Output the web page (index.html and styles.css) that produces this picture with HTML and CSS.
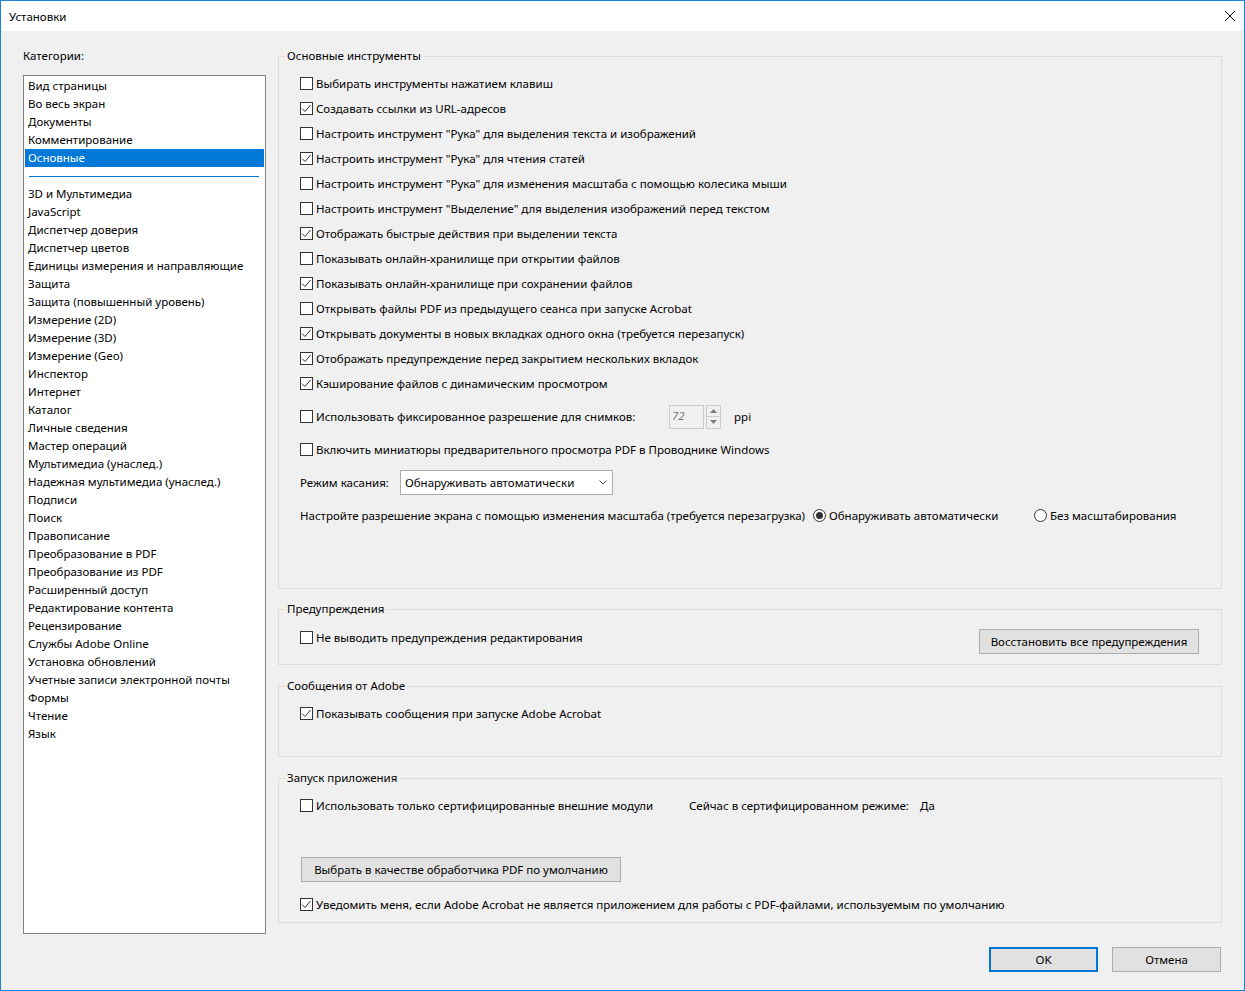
FILE: index.html
```html
<!DOCTYPE html>
<html lang="ru">
<head>
    <meta charset="UTF-8">
    <title>Установки</title>
    <link rel="stylesheet" href="styles.css">
</head>
<body>
<div class="window">
    <div class="titlebar">
        <span class="title">Установки</span>
        <svg class="close" width="10" height="10" viewBox="0 0 10 10"><path d="M0 0L10 10M10 0L0 10" stroke="#000" stroke-width="1"/></svg>
    </div>

    <div class="main">
        <div class="sidebar">
            <div class="side-label">Категории:</div>
            <ul class="category-list">
                <li>Вид страницы</li>
                <li>Во весь экран</li>
                <li>Документы</li>
                <li>Комментирование</li>
                <li class="selected">Основные</li>
                <li class="sep"></li>
                <li>3D и Мультимедиа</li>
                <li>JavaScript</li>
                <li>Диспетчер доверия</li>
                <li>Диспетчер цветов</li>
                <li>Единицы измерения и направляющие</li>
                <li>Защита</li>
                <li>Защита (повышенный уровень)</li>
                <li>Измерение (2D)</li>
                <li>Измерение (3D)</li>
                <li>Измерение (Geo)</li>
                <li>Инспектор</li>
                <li>Интернет</li>
                <li>Каталог</li>
                <li>Личные сведения</li>
                <li>Мастер операций</li>
                <li>Мультимедиа (унаслед.)</li>
                <li>Надежная мультимедиа (унаслед.)</li>
                <li>Подписи</li>
                <li>Поиск</li>
                <li>Правописание</li>
                <li>Преобразование в PDF</li>
                <li>Преобразование из PDF</li>
                <li>Расширенный доступ</li>
                <li>Редактирование контента</li>
                <li>Рецензирование</li>
                <li>Службы Adobe Online</li>
                <li>Установка обновлений</li>
                <li>Учетные записи электронной почты</li>
                <li>Формы</li>
                <li>Чтение</li>
                <li>Язык</li>
            </ul>
        </div>

        <div class="panel">
            <section class="group group-tools">
                <div class="group-title">Основные инструменты</div>
                <div class="checks">
                    <label class="check"><span class="box"></span>Выбирать инструменты нажатием клавиш</label>
                    <label class="check"><span class="box"><svg width="11" height="11" viewBox="0 0 11 11"><path d="M1 5.5L4 8.5L9.5 2" fill="none" stroke="#333"/></svg></span>Создавать ссылки из URL-адресов</label>
                    <label class="check"><span class="box"></span>Настроить инструмент "Рука" для выделения текста и изображений</label>
                    <label class="check"><span class="box"><svg width="11" height="11" viewBox="0 0 11 11"><path d="M1 5.5L4 8.5L9.5 2" fill="none" stroke="#333"/></svg></span>Настроить инструмент "Рука" для чтения статей</label>
                    <label class="check"><span class="box"></span>Настроить инструмент "Рука" для изменения масштаба с помощью колесика мыши</label>
                    <label class="check"><span class="box"></span>Настроить инструмент "Выделение" для выделения изображений перед текстом</label>
                    <label class="check"><span class="box"><svg width="11" height="11" viewBox="0 0 11 11"><path d="M1 5.5L4 8.5L9.5 2" fill="none" stroke="#333"/></svg></span>Отображать быстрые действия при выделении текста</label>
                    <label class="check"><span class="box"></span>Показывать онлайн-хранилище при открытии файлов</label>
                    <label class="check"><span class="box"><svg width="11" height="11" viewBox="0 0 11 11"><path d="M1 5.5L4 8.5L9.5 2" fill="none" stroke="#333"/></svg></span>Показывать онлайн-хранилище при сохранении файлов</label>
                    <label class="check"><span class="box"></span>Открывать файлы PDF из предыдущего сеанса при запуске Acrobat</label>
                    <label class="check"><span class="box"><svg width="11" height="11" viewBox="0 0 11 11"><path d="M1 5.5L4 8.5L9.5 2" fill="none" stroke="#333"/></svg></span>Открывать документы в новых вкладках одного окна (требуется перезапуск)</label>
                    <label class="check"><span class="box"><svg width="11" height="11" viewBox="0 0 11 11"><path d="M1 5.5L4 8.5L9.5 2" fill="none" stroke="#333"/></svg></span>Отображать предупреждение перед закрытием нескольких вкладок</label>
                    <label class="check"><span class="box"><svg width="11" height="11" viewBox="0 0 11 11"><path d="M1 5.5L4 8.5L9.5 2" fill="none" stroke="#333"/></svg></span>Кэширование файлов с динамическим просмотром</label>
                </div>

                <div class="opt-rows">
                    <div class="opt-row">
                        <label class="check snap-label"><span class="box"></span>Использовать фиксированное разрешение для снимков:</label>
                        <div class="spin-input">72</div>
                        <div class="spin-btns">
                            <span class="spin-btn"><svg width="7" height="4" viewBox="0 0 7 4"><path d="M0 4H7L3.5 0Z" fill="#7a7a7a"/></svg></span>
                            <span class="spin-btn"><svg width="7" height="4" viewBox="0 0 7 4"><path d="M0 0H7L3.5 4Z" fill="#7a7a7a"/></svg></span>
                        </div>
                        <span class="unit">ppi</span>
                    </div>
                    <div class="opt-row">
                        <label class="check"><span class="box"></span>Включить миниатюры предварительного просмотра PDF в Проводнике Windows</label>
                    </div>
                    <div class="opt-row">
                        <span class="touch-label">Режим касания:</span>
                        <div class="select">
                            <span>Обнаруживать автоматически</span>
                            <svg width="8" height="5" viewBox="0 0 8 5"><path d="M0.5 0.5L4 4L7.5 0.5" fill="none" stroke="#555"/></svg>
                        </div>
                    </div>
                    <div class="opt-row">
                        <span class="scale-label">Настройте разрешение экрана с помощью изменения масштаба (требуется перезагрузка)</span>
                        <label class="radio radio-auto"><span class="dot on"></span>Обнаруживать автоматически</label>
                        <label class="radio"><span class="dot"></span>Без масштабирования</label>
                    </div>
                </div>
            </section>

            <section class="group group-warn">
                <div class="group-title">Предупреждения</div>
                <div class="warn-row">
                    <label class="check"><span class="box"></span>Не выводить предупреждения редактирования</label>
                    <button class="btn btn-restore">Восстановить все предупреждения</button>
                </div>
            </section>

            <section class="group group-msg">
                <div class="group-title">Сообщения от Adobe</div>
                <label class="check first-check"><span class="box"><svg width="11" height="11" viewBox="0 0 11 11"><path d="M1 5.5L4 8.5L9.5 2" fill="none" stroke="#333"/></svg></span>Показывать сообщения при запуске Adobe Acrobat</label>
            </section>

            <section class="group group-launch">
                <div class="group-title">Запуск приложения</div>
                <div class="launch-row">
                    <label class="check cert-label"><span class="box"></span>Использовать только сертифицированные внешние модули</label>
                    <span class="cert-mode">Сейчас в сертифицированном режиме:</span>
                    <span>Да</span>
                </div>
                <button class="btn btn-handler">Выбрать в качестве обработчика PDF по умолчанию</button>
                <label class="check notify-check"><span class="box"><svg width="11" height="11" viewBox="0 0 11 11"><path d="M1 5.5L4 8.5L9.5 2" fill="none" stroke="#333"/></svg></span>Уведомить меня, если Adobe Acrobat не является приложением для работы с PDF-файлами, используемым по умолчанию</label>
            </section>
        </div>
    </div>

    <div class="footer">
        <button class="btn btn-dialog btn-default">OK</button>
        <button class="btn btn-dialog">Отмена</button>
    </div>
</div>
</body>
</html>
```

FILE: styles.css
```css
* {
    margin: 0;
    padding: 0;
    box-sizing: border-box;
}

body {
    font-family: "Noto Sans", "Liberation Sans", sans-serif;
    font-size: 11.5px;
    color: #000;
    background: #f0f0f0;
}

.window {
    height: 991px;
    border: 1px solid #1883d7;
    background: #f0f0f0;
    display: flex;
    flex-direction: column;
}

.titlebar {
    height: 30px;
    background: #fff;
    display: flex;
    align-items: center;
    justify-content: space-between;
    padding: 0 9px 0 8px;
}

/* left column */

.main {
    display: flex;
    align-items: flex-start;
    gap: 12px;
    padding: 17px 22px 0 22px;
}

.sidebar {
    width: 243px;
    flex: none;
}

.side-label {
    line-height: 16px;
}

.category-list {
    list-style: none;
    margin-top: 11px;
    height: 859px;
    background: #fff;
    border: 1px solid #828282;
    padding: 1px;
}

.category-list li {
    height: 18px;
    line-height: 18px;
    padding-left: 3px;
    white-space: nowrap;
}

.category-list .selected {
    background: #0078d7;
    color: #fff;
}

.category-list .sep {
    padding: 9px 5px 0 4px;
}

.category-list .sep::after {
    content: "";
    display: block;
    height: 1px;
    background: #0078d7;
}

/* right column */

.panel {
    flex: 1;
    padding-top: 8px;
}

.group {
    border: 1px solid #dcdcdc;
    padding-left: 21px;
}

.group-title {
    line-height: 16px;
    margin: -9px 0 0 -15px;
    padding: 0 2px;
    width: max-content;
    background: #f0f0f0;
}

.group-tools { height: 533px; }
.group-warn { height: 56px; margin-top: 20px; }
.group-msg { height: 71px; margin-top: 21px; }
.group-launch { height: 145px; margin-top: 21px; }

.checks {
    margin-top: 7px;
}

.check {
    display: flex;
    align-items: center;
    height: 25px;
    white-space: nowrap;
}

.box {
    width: 13px;
    height: 13px;
    border: 1px solid #333;
    background: #fff;
    margin-right: 3px;
    flex: none;
    display: flex;
    align-items: center;
    justify-content: center;
}

.opt-rows {
    margin-top: 4px;
}

.opt-row {
    display: flex;
    align-items: center;
    height: 33px;
    white-space: nowrap;
}

.snap-label {
    width: 369px;
}

.spin-input {
    width: 35px;
    height: 24px;
    border: 1px solid #cccccc;
    background: #f0f0f0;
    color: #7a7a7a;
    font-style: italic;
    line-height: 20px;
    padding-left: 2px;
}

.spin-btns {
    display: flex;
    flex-direction: column;
    margin-left: 2px;
    height: 24px;
}

.spin-btn {
    width: 15px;
    height: 12px;
    border: 1px solid #cccccc;
    display: flex;
    align-items: center;
    justify-content: center;
}

.spin-btn + .spin-btn {
    border-top: none;
}

.unit {
    margin-left: 13px;
}

.touch-label {
    width: 100px;
}

.select {
    width: 213px;
    height: 25px;
    border: 1px solid #adadad;
    background: #fff;
    display: flex;
    align-items: center;
    justify-content: space-between;
    padding: 0 5px 0 4px;
}

.scale-label {
    width: 513px;
}

.radio {
    display: flex;
    align-items: center;
}

.radio-auto {
    width: 221px;
}

.dot {
    width: 13px;
    height: 13px;
    border: 1px solid #333;
    border-radius: 50%;
    background: #fff;
    margin-right: 3px;
    display: flex;
    align-items: center;
    justify-content: center;
}

.dot.on::after {
    content: "";
    width: 7px;
    height: 7px;
    border-radius: 50%;
    background: #333;
}

.btn {
    font: inherit;
    color: #000;
    height: 25px;
    background: #e1e1e1;
    border: 1px solid #adadad;
}

.warn-row {
    display: flex;
    align-items: flex-start;
    margin-top: 8px;
}

.btn-restore {
    width: 220px;
    margin: 4px 22px 0 auto;
}

.first-check {
    margin-top: 7px;
}

.launch-row {
    display: flex;
    align-items: center;
    margin-top: 7px;
    white-space: nowrap;
}

.cert-label {
    width: 389px;
}

.cert-mode {
    width: 231px;
}

.btn-handler {
    width: 320px;
    margin: 39px 0 0 1px;
}

.notify-check {
    margin-top: 10px;
}

/* dialog buttons */

.footer {
    display: flex;
    justify-content: flex-end;
    gap: 14px;
    margin-top: 13px;
    padding-right: 23px;
}

.btn-dialog {
    width: 109px;
}

.btn-default {
    border: 2px solid #0078d7;
}
```
